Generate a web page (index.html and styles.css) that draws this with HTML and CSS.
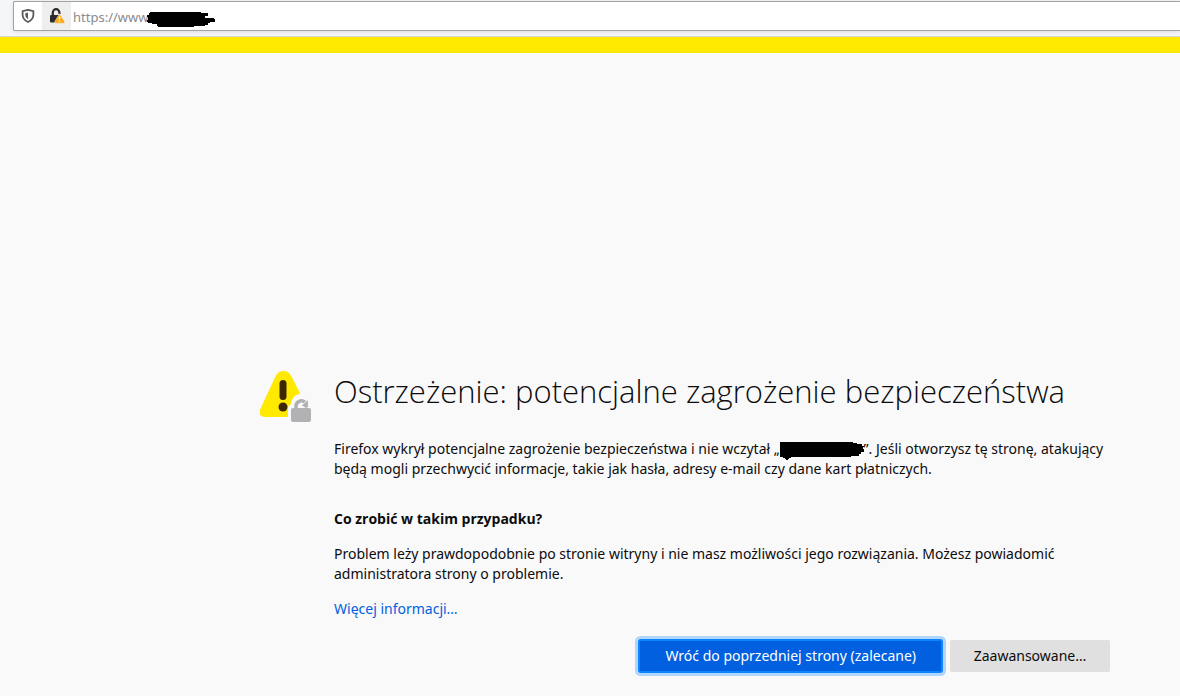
FILE: index.html
```html
<!DOCTYPE html>
<html lang="pl">
<head>
<meta charset="utf-8">
<title>Ostrzeżenie: potencjalne zagrożenie bezpieczeństwa</title>
<link rel="stylesheet" href="styles.css">
</head>
<body>
<header class="toolbar">
  <div class="urlbar">
    <button class="shield" type="button" aria-label="Ochrona">
      <svg width="14" height="16" viewBox="0 0 14 16"><path d="M7 1.800 12.400 3.200v3.600c0 3.600-2.200 5.800-5.400 7.200C3.800 12.600 1.600 10.400 1.600 6.800V3.200z" fill="none" stroke="#5b5b5e" stroke-width="1.800" stroke-linejoin="round"/><path d="M7 4.500v6.700C5.200 10.200 4.300 8.800 4.300 6.800V5.200z" fill="#5b5b5e"/></svg>
    </button>
    <button class="identity" type="button" aria-label="Informacje o witrynie">
      <svg width="16" height="16" viewBox="0 0 16 16"><path d="M3.800 8V4.500a3.300 3.300 0 0 1 6.600 0V6" fill="none" stroke="#2b2b2d" stroke-width="2.200"/><path d="M2 7h8.500v7.500H2a1 1 0 0 1-1-1V8a1 1 0 0 1 1-1z" fill="#2b2b2d"/><path d="M10.500 5.800 15.500 13.400q.6 1.800-1 1.800H6.800q-1.600 0-1-1.800z" fill="#ffa70f" stroke="#eee" stroke-width=".5"/><path d="M10.500 8.500v3M10.500 12.500v1.300" stroke="#fff" stroke-width="1.400"/></svg>
    </button>
    <div class="address">
      <input type="text" value="https://www" aria-label="Adres">
      <svg class="scribble" width="70" height="18" viewBox="0 0 70 18"><path d="M4 2h51v1h7v3h-3v2h9v1h1v3h-5v1h-2v2h-3v1H48v1H12v-1h-1v-2H6v-1H2v-1H1v-2h1V7H1V5h2V3h1z"/></svg>
    </div>
  </div>
</header>
<div class="stripe"></div>
<main class="warning">
  <svg class="warning-icon" width="52" height="52" viewBox="0 0 52 52">
    <path d="M23.500 1c3.700 0 6 1.700 7.600 4.800l17 33.200c2.300 4.500-.5 8-5.100 8H5c-4.700 0-7-3.800-4.600-8.300L15.800 5.800C17.400 2.700 19.800 1 23.500 1z" fill="#ffe900"/>
    <path d="M28 52V38q0-3 3-4c.5-6 4.500-10 9.500-10H52v28z" fill="#f9f9fa"/>
    <path d="M23 13.500v13" stroke="#3e2800" stroke-width="7" stroke-linecap="round"/>
    <circle cx="23" cy="37" r="4.500" fill="#3e2800"/>
    <path d="M36 41v-4.500a5.500 5.500 0 0 1 9-4.500" fill="none" stroke="#b1b1b3" stroke-width="3.500"/><path d="m42 35.500 6-5.500v7l-2 1z" fill="#b1b1b3"/>
    <rect x="31" y="38" width="20" height="14" rx="2" fill="#b1b1b3"/>
  </svg>
  <div class="content">
    <h1>Ostrzeżenie: potencjalne zagrożenie bezpieczeństwa</h1>
    <p>Firefox wykrył potencjalne zagrożenie bezpieczeństwa i nie wczytał „<svg class="redacted" width="84" height="20" viewBox="3 0 84 20"><path d="M0 3h2V2h74v1h4v1h5v2h2v1h-1v2h1v3h-3v2h-2v2h-8v1H14v1h-2v1h-1v1H9v-1H8v-1H6v-1H2v-1H0v-2h2v-2h1V8H2V6H0z"/></svg>”. Jeśli otworzysz tę stronę, atakujący będą mogli przechwycić informacje, takie jak hasła, adresy e-mail czy dane kart płatniczych.</p>
    <h2>Co zrobić w takim przypadku?</h2>
    <p>Problem leży prawdopodobnie po stronie witryny i nie masz możliwości jego rozwiązania. Możesz powiadomić administratora strony o problemie.</p>
    <p><a href="#more">Więcej informacji…</a></p>
    <div class="actions">
      <button class="button primary" type="button">Wróć do poprzedniej strony (zalecane)</button>
      <button class="button" type="button">Zaawansowane…</button>
    </div>
  </div>
</main>
</body>
</html>
```
FILE: styles.css
```css
* { box-sizing: border-box; }
body {
  margin: 0;
  background: #f9f9fa;
  color: #0c0c0d;
  font-family: "Noto Sans", "Open Sans", sans-serif;
  font-size: 14px;
  line-height: 20px;
}
button { font: inherit; }
.toolbar {
  padding: 1px 0 5px 13px;
  background: #f5f6f7;
  border-bottom: 1px solid #d5d5d5;
}
.urlbar {
  display: flex;
  height: 30px;
  background: #fff;
  border: 1px solid #a3a3a3;
  border-right: 0;
  border-radius: 2px 0 0 2px;
  box-shadow: 0 1px 4px #0000001a;
}
.shield, .identity {
  display: flex;
  align-items: center;
  justify-content: center;
  width: 28px;
  padding: 0;
  border: 0;
  background: none;
}
.identity { width: 29px; background: #eee; }
.address { position: relative; flex: 1; }
.address input {
  width: 100%;
  height: 28px;
  padding: 2px 2px 0;
  border: 0;
  outline: 0;
  background: none;
  color: #8a8a8f;
  font: inherit;
  font-size: 13px;
}
.scribble { position: absolute; left: 75px; top: 8px; }
.stripe { height: 16px; background: #ffe900; }
.warning {
  display: flex;
  gap: 22px;
  max-width: 850px;
  margin: 317px 70px 0 auto;
  padding-bottom: 24px;
}
.warning-icon { flex: none; }
.content { flex: 1; }
h1 {
  margin: 0 0 27px;
  font-family: "Open Sans", "Noto Sans", sans-serif;
  font-size: 31px;
  line-height: 42px;
  font-weight: 300;
}
h2 {
  margin: 30px 0 15px;
  font-family: "Open Sans", "Noto Sans", sans-serif;
  font-size: 14px;
  line-height: 20px;
  font-weight: 700;
}
p { margin: 0 0 15px; }
a { color: #0060df; text-decoration: none; }
.redacted { margin: -2px 0; vertical-align: middle; }
.actions { display: flex; justify-content: flex-end; gap: 8px; margin-top: 21px; }
.button {
  min-width: 160px;
  height: 32px;
  padding: 0 20px;
  border: 0;
  border-radius: 2px;
  background: #e0e0e1;
  color: #0c0c0d;
}
.primary {
  padding: 0 26px;
  background: #0060df;
  color: #fff;
  box-shadow: 0 0 0 1px #0a84ff, inset 0 0 0 1px #0a84ff, 0 0 0 4px #0a84ff4d;
}
```
